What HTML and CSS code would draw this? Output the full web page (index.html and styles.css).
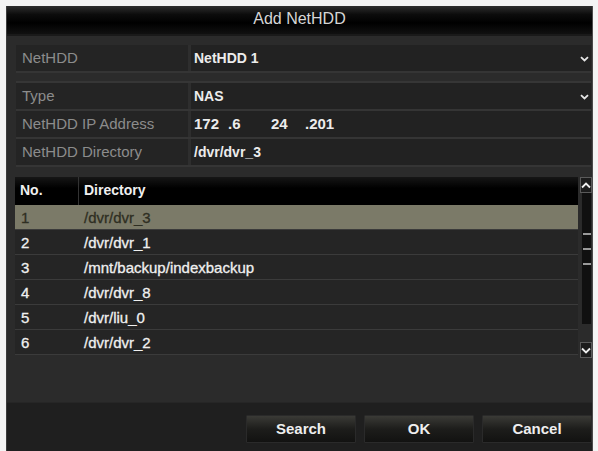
FILE: index.html
```html
<!DOCTYPE html>
<html>
<head>
<meta charset="utf-8">
<link rel="stylesheet" href="styles.css">
</head>
<body>
<div class="dialog">
  <div class="title">Add NetHDD</div>
  <div class="form">
    <div class="group">
      <div class="row">
        <div class="label">NetHDD</div>
        <div class="value">NetHDD 1<svg class="chev" width="9" height="6" viewBox="0 0 9 6"><path d="M1 1.2 L4.5 4.5 L8 1.2" fill="none" stroke="#e6e6e6" stroke-width="1.8"/></svg></div>
      </div>
    </div>
    <div class="group">
      <div class="row">
        <div class="label">Type</div>
        <div class="value">NAS<svg class="chev" width="9" height="6" viewBox="0 0 9 6"><path d="M1 1.2 L4.5 4.5 L8 1.2" fill="none" stroke="#e6e6e6" stroke-width="1.8"/></svg></div>
      </div>
      <div class="row">
        <div class="label">NetHDD IP Address</div>
        <div class="value ip"><span class="o1">172</span><span class="o2">.6</span><span class="o3">24</span><span>.201</span></div>
      </div>
      <div class="row">
        <div class="label">NetHDD Directory</div>
        <div class="value">/dvr/dvr_3</div>
      </div>
    </div>
  </div>
  <div class="tablewrap">
    <div class="table">
      <div class="thead"><div class="c1">No.</div><div class="c2">Directory</div></div>
      <div class="tr sel"><div class="c1">1</div><div class="c2">/dvr/dvr_3</div></div>
      <div class="tr"><div class="c1">2</div><div class="c2">/dvr/dvr_1</div></div>
      <div class="tr"><div class="c1">3</div><div class="c2">/mnt/backup/indexbackup</div></div>
      <div class="tr"><div class="c1">4</div><div class="c2">/dvr/dvr_8</div></div>
      <div class="tr"><div class="c1">5</div><div class="c2">/dvr/liu_0</div></div>
      <div class="tr"><div class="c1">6</div><div class="c2">/dvr/dvr_2</div></div>
    </div>
    <div class="scroll">
      <div class="sbtn"><svg width="10" height="7" viewBox="0 0 10 7"><path d="M1 5.5 L5 1.5 L9 5.5" fill="none" stroke="#eee" stroke-width="1.8"/></svg></div>
      <div class="track">
        <div class="thumb"><i></i><i></i><i></i></div>
      </div>
      <div class="sbtn down"><svg width="10" height="7" viewBox="0 0 10 7"><path d="M1 1.5 L5 5.5 L9 1.5" fill="none" stroke="#eee" stroke-width="1.8"/></svg></div>
    </div>
  </div>
  <div class="footer">
    <div class="btn">Search</div>
    <div class="btn">OK</div>
    <div class="btn">Cancel</div>
  </div>
</div>
</body>
</html>
```
FILE: styles.css
```css
html, body {
  margin: 0;
  padding: 0;
  background: #f4f4f4;
  overflow: hidden;
}
body {
  font-family: "Liberation Sans", Arial, sans-serif;
  font-size: 15px;
}
.dialog {
  margin: 6px 0 0 6px;
  width: 585px;
  height: 450px;
  background: #2b2b2b;
  border-left: 1px solid #3c3c3c;
  border-right: 1px solid #4a4a4a;
  display: flex;
  flex-direction: column;
}
.title {
  height: 28px;
  line-height: 26px;
  text-align: center;
  color: #d6d6d6;
  font-size: 16px;
  background: linear-gradient(#2e2e2e 0%, #0c0c0c 30%, #000 60%, #111 100%);
  border-bottom: 2px solid #1a1a1a;
}
.form {
  padding: 9px 1px 0 9px;
  display: flex;
  flex-direction: column;
  gap: 8px;
}
.group {
  border-top: 2px solid #363636;
  display: flex;
  flex-direction: column;
}
.group:first-child {
  border-top: none;
}
.row {
  display: grid;
  grid-template-columns: 172px 1fr;
  gap: 3px;
  height: 26px;
  border-bottom: 2px solid #353535;
  background: #2e2e2e;
}
.label {
  background: #242424;
  color: #8c8c8c;
  padding-left: 6px;
  line-height: 26px;
  white-space: nowrap;
}
.value {
  background: #222;
  color: #ececec;
  font-weight: bold;
  font-size: 14px;
  padding-left: 3px;
  line-height: 26px;
  display: flex;
  align-items: center;
  justify-content: space-between;
  padding-right: 2px;
}
.value.ip {
  justify-content: flex-start;
  font-size: 15px;
}
.value.ip .o1 { width: 34px; }
.value.ip .o2 { width: 43px; }
.value.ip .o3 { width: 34px; }
.chev {
  margin-top: 2px;
}
.tablewrap {
  margin-top: 10px;
  padding-left: 8px;
  display: flex;
  gap: 2px;
}
.table {
  width: 565px;
  display: flex;
  flex-direction: column;
}
.thead, .tr {
  display: grid;
  grid-template-columns: 63px 1fr;
  color: #f0f0f0;
  font-weight: bold;
  font-size: 14px;
}
.thead {
  height: 28px;
  line-height: 27px;
  background: linear-gradient(#161616, #000 40%, #000);
}
.thead .c2 {
  border-left: 1px solid #333;
  padding-left: 5px;
}
.thead .c1 { padding-left: 5px; }
.tr {
  height: 24px;
  line-height: 25px;
  background: #252525;
  border-bottom: 1px solid #3b3b3b;
  font-weight: normal;
  font-size: 15px;
  -webkit-text-stroke: 0.3px #f0f0f0;
}
.tr .c1 { padding-left: 6px; }
.tr .c2 { padding-left: 6px; }
.tr.sel {
  background: #7b7a68;
  color: #2e2e22;
  -webkit-text-stroke: 0.3px #2e2e22;
}
.scroll {
  width: 12px;
  display: flex;
  flex-direction: column;
  height: 181px;
}
.sbtn {
  height: 14px;
  border: 1px solid #5a5a5a;
  background: #1c1c1c;
  display: flex;
  align-items: center;
  justify-content: center;
}
.sbtn svg { width: 10px; }
.track {
  flex: 1;
  background: #101010;
  border-left: 1px solid #2a2a2a;
  margin: 0 1px;
  position: relative;
}
.thumb {
  margin-top: 40px;
  height: 32px;
  display: flex;
  flex-direction: column;
  justify-content: space-between;
  align-items: center;
}
.thumb i {
  display: block;
  width: 8px;
  height: 2px;
  background: #9a9a9a;
}
.sbtn.down {
  margin-top: 18px;
}
.footer {
  margin-top: 44px;
  flex: 1;
  background: #1f1f1f;
  border-top: 1px solid #262626;
  display: flex;
  justify-content: flex-end;
  align-items: flex-start;
  gap: 8px;
  padding-top: 12px;
  padding-right: 0;
}
.btn {
  width: 108px;
  height: 26px;
  line-height: 26px;
  text-align: center;
  color: #eee;
  font-weight: bold;
  font-size: 15px;
  background: linear-gradient(#3a3a36, #1d1d1b 50%, #121211);
  border: 1px solid #2a2a2a;
  border-radius: 1px;
}
```
